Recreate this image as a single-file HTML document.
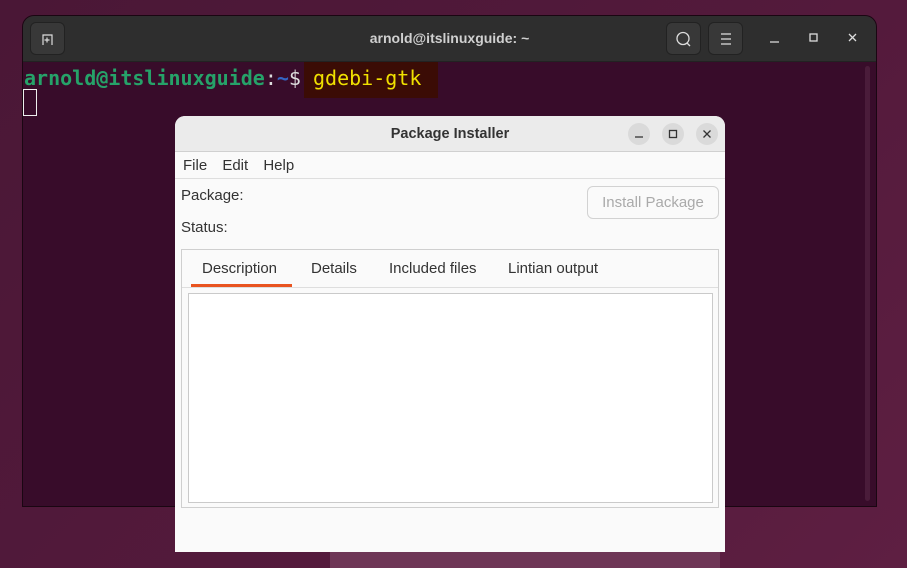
<!DOCTYPE html>
<html style="width:907px;height:568px;overflow:hidden"><head><style>
*{margin:0;padding:0;box-sizing:border-box}
body{width:907px;height:568px;overflow:hidden;position:relative;font-family:"Liberation Sans",sans-serif;background:linear-gradient(135deg,#4a1736 0%,#541a3c 60%,#5e1f42 100%)}
.abs{position:absolute}
.term{left:22px;top:15px;width:855px;height:492px;border-radius:12px 12px 0 0;background:#380c2a;border:1px solid #1a0612;overflow:hidden}
.thead{left:0;top:0;width:100%;height:46px;background:#2e2e2e;border-bottom:1px solid #222}
.tbtn{width:35px;height:33px;border-radius:6px;background:#383838;border:1px solid #222;top:6px}
.mono{font-family:"DejaVu Sans Mono","Liberation Mono",monospace;font-size:20px}
.dlg{left:175px;top:116px;width:550px;height:436px;background:#fafafa;border-radius:10px 10px 0 0;overflow:hidden}
.dt{left:0;top:0;width:100%;height:36px;background:#ebebeb;border-bottom:1px solid #d0d0d0;text-align:center;font-weight:bold;font-size:14.5px;color:#333;line-height:36px}
.cb{width:22px;height:22px;border-radius:50%;background:#dadada;top:7px}
.t14{font-size:15px;color:#333}
</style></head><body>
<div class="abs" style="left:330px;top:520px;width:240px;height:48px;background:#6e3656;border-radius:12px 12px 0 0"></div>
<div class="abs" style="left:555px;top:520px;width:165px;height:48px;background:#6e3656;border-radius:12px 12px 0 0"></div>
<div class="abs term">
 <div class="abs thead">
  <div class="abs tbtn" style="left:7px"><svg width="35" height="33"><path d="M12 22V12h9v10M13.5 17h5M16 14.5v5" stroke="#ddd" stroke-width="1.2" fill="none"/></svg></div>
  <div class="abs" style="left:0;width:100%;top:14px;text-align:center;color:#d0d0d0;font-size:14px;font-weight:bold">arnold@itslinuxguide: ~</div>
  <div class="abs tbtn" style="left:643px"><svg width="35" height="33"><circle cx="16" cy="15.5" r="6" stroke="#ddd" stroke-width="1.3" fill="none"/><path d="M20 20l3 3" stroke="#ddd" stroke-width="1.3"/></svg></div>
  <div class="abs tbtn" style="left:685px"><svg width="35" height="33"><path d="M12 11h10M12 16h10M12 21h10" stroke="#ddd" stroke-width="1.2"/></svg></div>
  <svg class="abs" style="left:740px;top:14px" width="100" height="18"><path d="M7 12h9" stroke="#ddd" stroke-width="1.3"/><rect x="47" y="4" width="7" height="7" stroke="#ddd" stroke-width="1.3" fill="none"/><path d="M86 4l7 7M93 4l-7 7" stroke="#ddd" stroke-width="1.3"/></svg>
 </div>
 <div class="abs" style="right:6px;top:50px;width:5px;height:435px;background:#4a1c3a;border-radius:3px"></div>
 <div class="abs" style="left:281px;top:46px;width:134px;height:36px;background:#3b0c05"></div>
 <div class="abs mono" style="left:1px;top:50px;white-space:pre;font-weight:bold;color:#26a269">arnold@itslinuxguide<span style="color:#ddd;font-weight:normal">:</span><span style="color:#3465c4">~</span><span style="color:#ddd;font-weight:normal">$ </span><span style="color:#f0e000;font-weight:normal">gdebi-gtk</span></div>
 <div class="abs" style="left:0;top:73px;width:14px;height:27px;border:1px solid #eee"></div>
</div>
<div class="abs dlg">
 <div class="abs dt">Package Installer</div>
 <div class="abs cb" style="left:453px"><svg width="22" height="22"><path d="M7 14h8" stroke="#333" stroke-width="1.3"/></svg></div>
 <div class="abs cb" style="left:487px"><svg width="22" height="22"><rect x="7.5" y="7.5" width="7" height="7" stroke="#333" stroke-width="1.3" fill="none"/></svg></div>
 <div class="abs cb" style="left:521px"><svg width="22" height="22"><path d="M7.5 7.5l7 7M14.5 7.5l-7 7" stroke="#333" stroke-width="1.3"/></svg></div>
 <div class="abs t14" style="left:8px;top:41px;word-spacing:11px">File Edit Help</div>
 <div class="abs" style="left:0;top:62px;width:100%;height:1px;background:#dedede"></div>
 <div class="abs t14" style="left:6px;top:71px">Package:</div>
 <div class="abs t14" style="left:6px;top:103px">Status:</div>
 <div class="abs" style="left:412px;top:70px;width:132px;height:33px;border:1px solid #d2d2d2;border-radius:6px;background:#fafafa;color:#aaa;font-size:15px;text-align:center;line-height:31px">Install Package</div>
 <div class="abs" style="left:6px;top:133px;width:538px;height:259px;border:1px solid #cfcfcf">
  <div class="abs" style="left:0;top:37px;width:100%;height:1px;background:#dedede"></div>
  <div class="abs t14" style="left:20px;top:10px">Description</div>
  <div class="abs" style="left:9px;top:34px;width:101px;height:3px;background:#e95420"></div>
  <div class="abs t14" style="left:129px;top:10px">Details</div>
  <div class="abs t14" style="left:207px;top:10px">Included files</div>
  <div class="abs t14" style="left:326px;top:10px">Lintian output</div>
  <div class="abs" style="left:6px;top:43px;width:525px;height:210px;background:#fff;border:1px solid #cacaca"></div>
 </div>
</div>
</body></html>
